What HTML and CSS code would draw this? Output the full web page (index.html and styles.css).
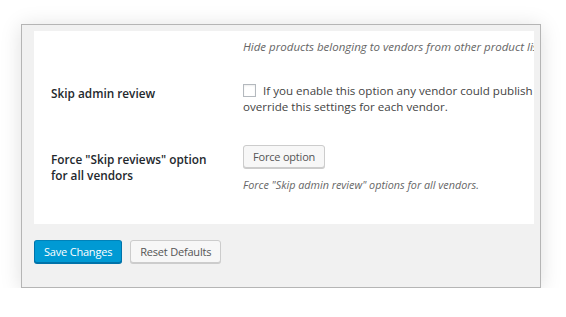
FILE: index.html
```
<!DOCTYPE html>
<html lang="en">
<head>
    <meta charset="UTF-8">
    <title>Vendor Settings</title>
    <link rel="stylesheet" href="styles.css">
</head>
<body>
    <div class="frame">
        <div class="panel">
            <div class="row row-first">
                <div class="label"></div>
                <div class="field">
                    <p class="description">Hide products belonging to vendors from other product lists</p>
                </div>
            </div>
            <div class="row row-review">
                <div class="label">Skip admin review</div>
                <div class="field">
                    <label class="check-line"><span class="checkbox"></span>If you enable this option any vendor could publish products without review, you can<br>override this settings for each vendor.</label>
                </div>
            </div>
            <div class="row row-force">
                <div class="label">Force "Skip reviews" option<br>for all vendors</div>
                <div class="field">
                    <button class="button">Force option</button>
                    <p class="description">Force "Skip admin review" options for all vendors.</p>
                </div>
            </div>
        </div>
        <div class="actions">
            <button class="button button-primary">Save Changes</button>
            <button class="button">Reset Defaults</button>
        </div>
    </div>
</body>
</html>
```

FILE: styles.css
```
* {
    margin: 0;
    padding: 0;
    box-sizing: border-box;
    font-family: 'Open Sans', sans-serif;
}

body {
    background: #fff;
    color: #444;
    font-size: 12px;
}

.frame {
    width: 520px;
    height: 264px;
    margin: 24px 0 0 21px;
    padding: 6px 6px 0 12px;
    background: #f1f1f1;
    border: 1px solid #b5b5b5;
    box-shadow: 0 2px 20px rgba(0, 0, 0, 0.13);
}

.panel {
    background: #fff;
    height: 193px;
    overflow: hidden;
}

.row {
    display: flex;
    white-space: nowrap;
}

.label {
    width: 209px;
    flex-shrink: 0;
    padding-left: 17px;
    color: #23282d;
    font-weight: 600;
    font-size: 11.8px;
    line-height: 16px;
}

.field {
    font-size: 11.6px;
    line-height: 16px;
}

.row-first {
    padding-top: 7px;
}

.row-review {
    padding-top: 28px;
}

.row-review .label {
    padding-top: 2px;
}

.row-force {
    padding-top: 30px;
}

.row-force .label {
    padding-top: 6px;
}

.description {
    font-style: italic;
    color: #666;
    font-size: 10.8px;
    line-height: 17px;
}

.row-first .description {
    font-size: 11.5px;
}

.row-force .description {
    margin-top: 8px;
}

.check-line {
    display: block;
}

.checkbox {
    display: inline-block;
    width: 13px;
    height: 13px;
    border: 1px solid #b4b9be;
    background: #fff;
    box-shadow: inset 0 1px 2px rgba(0, 0, 0, 0.07);
    vertical-align: -2px;
    margin-right: 7px;
}

.button {
    display: inline-block;
    height: 23px;
    padding: 0 9px;
    font-size: 11px;
    letter-spacing: -0.2px;
    line-height: 21px;
    color: #555;
    background: #f7f7f7;
    border: 1px solid #ccc;
    border-radius: 3px;
    box-shadow: 0 1px 0 #ccc;
    cursor: pointer;
}

.button-primary {
    background: #009ad4;
    border-color: #0082b9 #0073aa #0073aa;
    color: #fff;
    box-shadow: 0 1px 0 #0073aa;
}

.actions {
    display: flex;
    gap: 8px;
    padding-top: 16px;
}
```
